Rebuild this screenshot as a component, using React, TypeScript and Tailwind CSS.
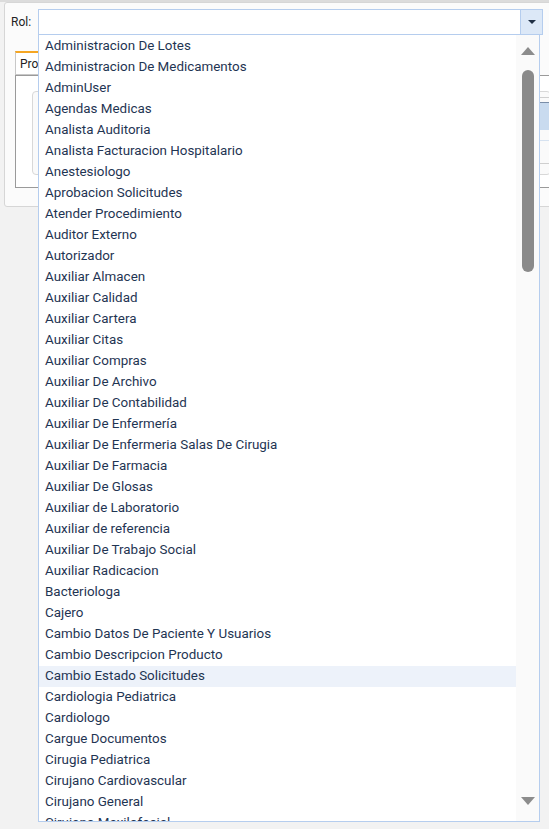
import React from 'react';

const roles = [
  'Administracion De Lotes',
  'Administracion De Medicamentos',
  'AdminUser',
  'Agendas Medicas',
  'Analista Auditoria',
  'Analista Facturacion Hospitalario',
  'Anestesiologo',
  'Aprobacion Solicitudes',
  'Atender Procedimiento',
  'Auditor Externo',
  'Autorizador',
  'Auxiliar Almacen',
  'Auxiliar Calidad',
  'Auxiliar Cartera',
  'Auxiliar Citas',
  'Auxiliar Compras',
  'Auxiliar De Archivo',
  'Auxiliar De Contabilidad',
  'Auxiliar De Enfermería',
  'Auxiliar De Enfermeria Salas De Cirugia',
  'Auxiliar De Farmacia',
  'Auxiliar De Glosas',
  'Auxiliar de Laboratorio',
  'Auxiliar de referencia',
  'Auxiliar De Trabajo Social',
  'Auxiliar Radicacion',
  'Bacteriologa',
  'Cajero',
  'Cambio Datos De Paciente Y Usuarios',
  'Cambio Descripcion Producto',
  'Cambio Estado Solicitudes',
  'Cardiologia Pediatrica',
  'Cardiologo',
  'Cargue Documentos',
  'Cirugia Pediatrica',
  'Cirujano Cardiovascular',
  'Cirujano General',
  'Cirujano Maxilofacial',
];

const selected = 'Cambio Estado Solicitudes';

export default function App() {
  return (
    <div
      className="relative w-full h-[829px] overflow-hidden bg-[#f2f2f2] text-[13.4px] text-[#1f3553]"
      style={{ fontFamily: 'Roboto, "Liberation Sans", sans-serif' }}
    >
      <div className="h-[2px] bg-[#dcdcdc]" />

      {/* background form panel */}
      <div className="ml-[4px] mr-[-4px] h-[205px] border border-[#d6d6d6] rounded-[3px] bg-[#fbfbfb]">
        <div className="flex items-center h-[30px] mt-[4px]">
          <span className="pl-[6px] w-[33px] text-[12px] text-[#222]">Rol:</span>
          <div className="flex-1 flex h-[26px] mr-[9px] border border-[#b5cdee] bg-white">
            <div className="flex-1" />
            <div className="w-[22px] border-l border-[#b5cdee] bg-[#dce8f7] flex items-center justify-center">
              <div className="w-0 h-0 border-l-[4px] border-r-[4px] border-t-[4px] border-l-transparent border-r-transparent border-t-[#1f2f45]" />
            </div>
          </div>
        </div>

        <div className="ml-[10px] mt-[14px] flex">
          <div className="h-[24px] w-[30px] border border-[#c8c8c8] border-t-2 border-t-[#f5a623] bg-white px-[4px] pt-[2px] text-[12px] text-[#222]">
            Pro
          </div>
        </div>
        <div className="ml-[10px] h-[113px] border border-[#9a9a9a] bg-white pt-[15px] pl-[16px]">
          <div className="h-[84px] border border-[#d8d8d8] rounded-[4px] bg-[#fafafa] flex flex-col">
            <div className="h-[5px]" />
            <div className="ml-auto w-[20px] h-[1px] bg-[#cfcfcf]" />
            <div className="ml-auto w-[20px] h-[28px] mt-[4px] bg-[#c9dbef] border-t border-[#7a8ea8]" />
            <div className="ml-auto w-[20px] h-[1px] mt-[10px] bg-[#d6e2f0]" />
            <div className="ml-auto w-[20px] h-[1px] mt-[22px] bg-[#cfcfcf]" />
          </div>
        </div>
      </div>

      {/* dropdown list */}
      <div className="absolute left-[38px] top-[35px] w-[502px] h-[787px] border border-t-0 border-[#b5cdee] bg-white flex overflow-hidden">
        <div className="flex-1 flex flex-col pt-[1px]">
          {roles.map((r) => (
            <div
              key={r}
              className={`h-[21px] shrink-0 flex items-center pl-[6px] whitespace-nowrap ${
                r === selected ? 'bg-[#edf2fa]' : ''
              }`}
            >
              {r}
            </div>
          ))}
        </div>
        <div className="w-[23px] bg-[#fafafa] flex flex-col items-center">
          <div className="mt-[12px] w-0 h-0 border-l-[7px] border-r-[7px] border-b-[8px] border-l-transparent border-r-transparent border-b-[#8c8c8c]" />
          <div className="mt-[15px] w-[12px] h-[202px] rounded-full bg-[#8a8a8a]" />
          <div className="mt-auto mb-[16px] w-0 h-0 border-l-[7px] border-r-[7px] border-t-[8px] border-l-transparent border-r-transparent border-t-[#8c8c8c]" />
        </div>
      </div>
    </div>
  );
}
